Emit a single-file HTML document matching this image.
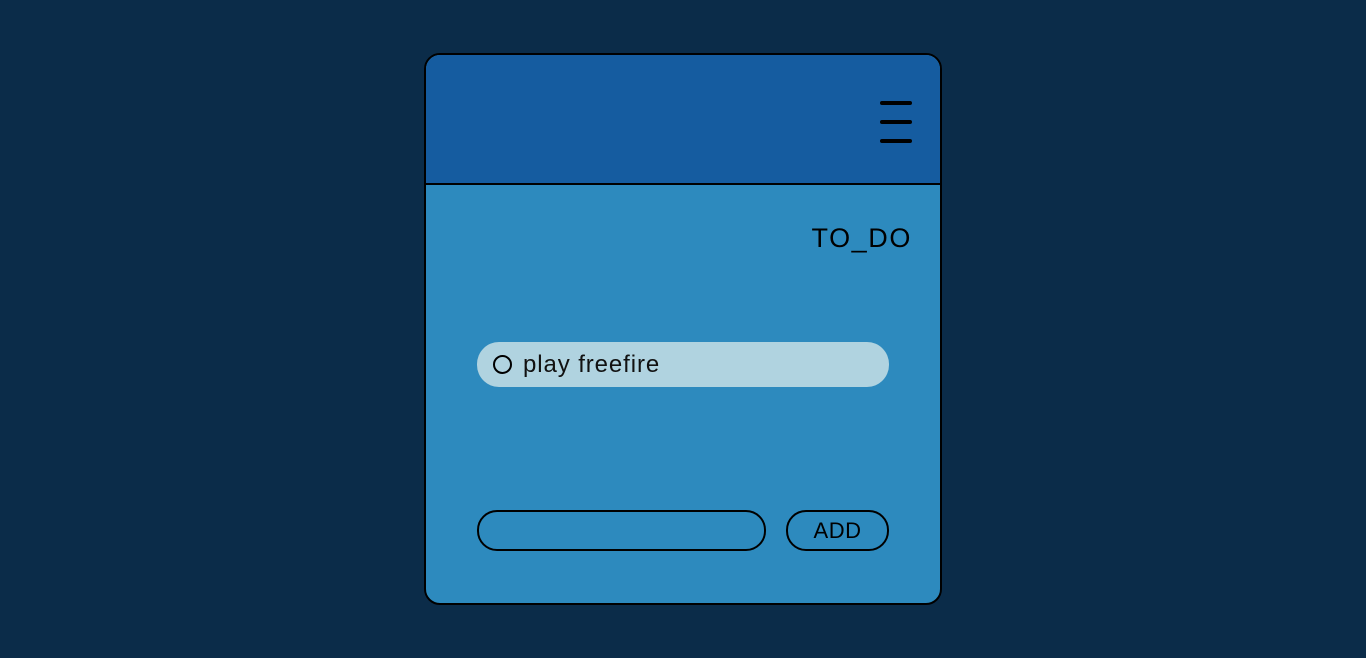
<!DOCTYPE html>
<html><head><style>
html,body{margin:0;padding:0;width:1366px;height:658px;background:#0b2c49;overflow:hidden;font-family:"Liberation Sans",sans-serif;}
.card{position:absolute;left:424px;top:53px;width:514px;height:548px;border:2px solid #000;border-radius:16px;overflow:hidden;background:#2d8abe;}
.hdr{position:absolute;left:0;top:0;width:100%;height:128px;background:#155ca0;border-bottom:2px solid #000;}
.bar{position:absolute;left:454px;width:32px;height:3.5px;background:#000;border-radius:2px;}
.title{position:absolute;right:28px;top:168px;font-size:27px;color:#000;letter-spacing:1.6px;}
.item{position:absolute;left:51px;top:287px;width:412px;height:45px;background:#b0d3e0;border-radius:22px;}
.circ{position:absolute;left:16px;top:13px;width:15px;height:15px;border:2px solid #000;border-radius:50%;}
.itxt{position:absolute;left:46px;top:9px;font-size:24px;color:#111;letter-spacing:0.9px;}
.inp{position:absolute;left:51px;top:455px;width:285px;height:37px;border:2px solid #000;border-radius:20px;}
.btn{position:absolute;left:360px;top:455px;width:99px;height:37px;border:2px solid #000;border-radius:20px;text-align:center;line-height:38px;font-size:22px;letter-spacing:0.5px;}
</style></head><body>
<div class="card">
<div class="hdr">
<div class="bar" style="top:46px"></div>
<div class="bar" style="top:65px"></div>
<div class="bar" style="top:84px"></div>
</div>
<div class="title">TO_DO</div>
<div class="item"><div class="circ"></div><div class="itxt">play freefire</div></div>
<div class="inp"></div>
<div class="btn">ADD</div>
</div>
</body></html>
